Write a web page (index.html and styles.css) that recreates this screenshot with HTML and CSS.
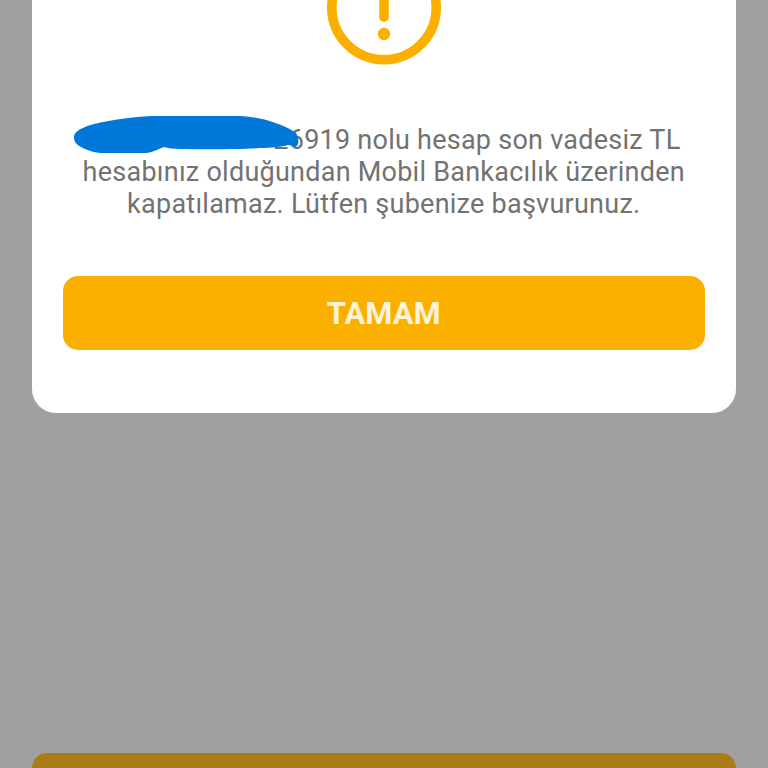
FILE: index.html
```
<!DOCTYPE html>
<html lang="tr">
<head>
<meta charset="utf-8">
<title>Hesap</title>
<link rel="stylesheet" href="styles.css">
</head>
<body>
<main class="screen">
  <section class="dialog">
    <svg class="alert-icon" viewBox="0 0 120 70" aria-hidden="true">
      <circle cx="60" cy="7.4" r="52.2"/>
      <path d="M60 -20V17.2"/>
      <circle class="dot" cx="60" cy="34" r="6.2"/>
    </svg>
    <div class="message">
      <p class="line first">26919 nolu hesap son vadesiz TL</p>
      <p class="line second">hesabınız olduğundan Mobil Bankacılık üzerinden</p>
      <p class="line third">kapatılamaz. Lütfen şubenize başvurunuz.</p>
      <svg class="redaction" viewBox="0 0 228 40" aria-hidden="true">
        <path d="M1 23C0 15 15 10 30 7C47 4 63 1.5 79 1H168C180 2 192 4 201 7.500C209 10 215 13 220 16C224 18 225 21 225 24C226 27 225 31 222 32C220 32 218 30 215 30C209 32 198 33 187 33C171 34.500 130 34.500 107 34C100 34 95 33 91 32C85 34 80 37 74 38H27C19 37 11 34 6 31C3 29 1 26 1 23Z"/>
      </svg>
    </div>
    <button class="confirm"><span>TAMAM</span></button>
  </section>
  <div class="page-button"></div>
</main>
</body>
</html>
```
FILE: styles.css
```
* { box-sizing: border-box; }
body { margin: 0; background: #a0a09e; font-family: Roboto, sans-serif; }
.screen { height: 768px; padding: 0 32px; display: flex; flex-direction: column; justify-content: space-between; overflow: hidden; }
.dialog { height: 413px; padding: 0 31.5px 63px 31px; background: #fff; border-radius: 0 0 24px 24px; display: flex; flex-direction: column; }
.alert-icon { width: 120px; height: 70px; align-self: center; flex: none; fill: none; stroke: #fbb000; stroke-width: 9.6; stroke-linecap: round; }
.alert-icon .dot { fill: #fbb000; stroke: none; }
.message { position: relative; padding-top: 54px; color: #727272; font-size: 27px; line-height: 32px; letter-spacing: 0.25px; }
.line { margin: 0; white-space: nowrap; text-align: center; }
.first { text-align: right; padding-right: 24px; }
.redaction { position: absolute; left: 10px; top: 45px; width: 228px; height: 40px; fill: #0078d9; }
.confirm { margin-top: auto; height: 74px; flex: none; border: 0; border-radius: 15px; background: #fbb000; color: #fff3da; font: 700 31px Roboto, sans-serif; padding: 0; }
.page-button { height: 15px; flex: none; background: #a97c17; border-radius: 15px 15px 0 0; }
```
